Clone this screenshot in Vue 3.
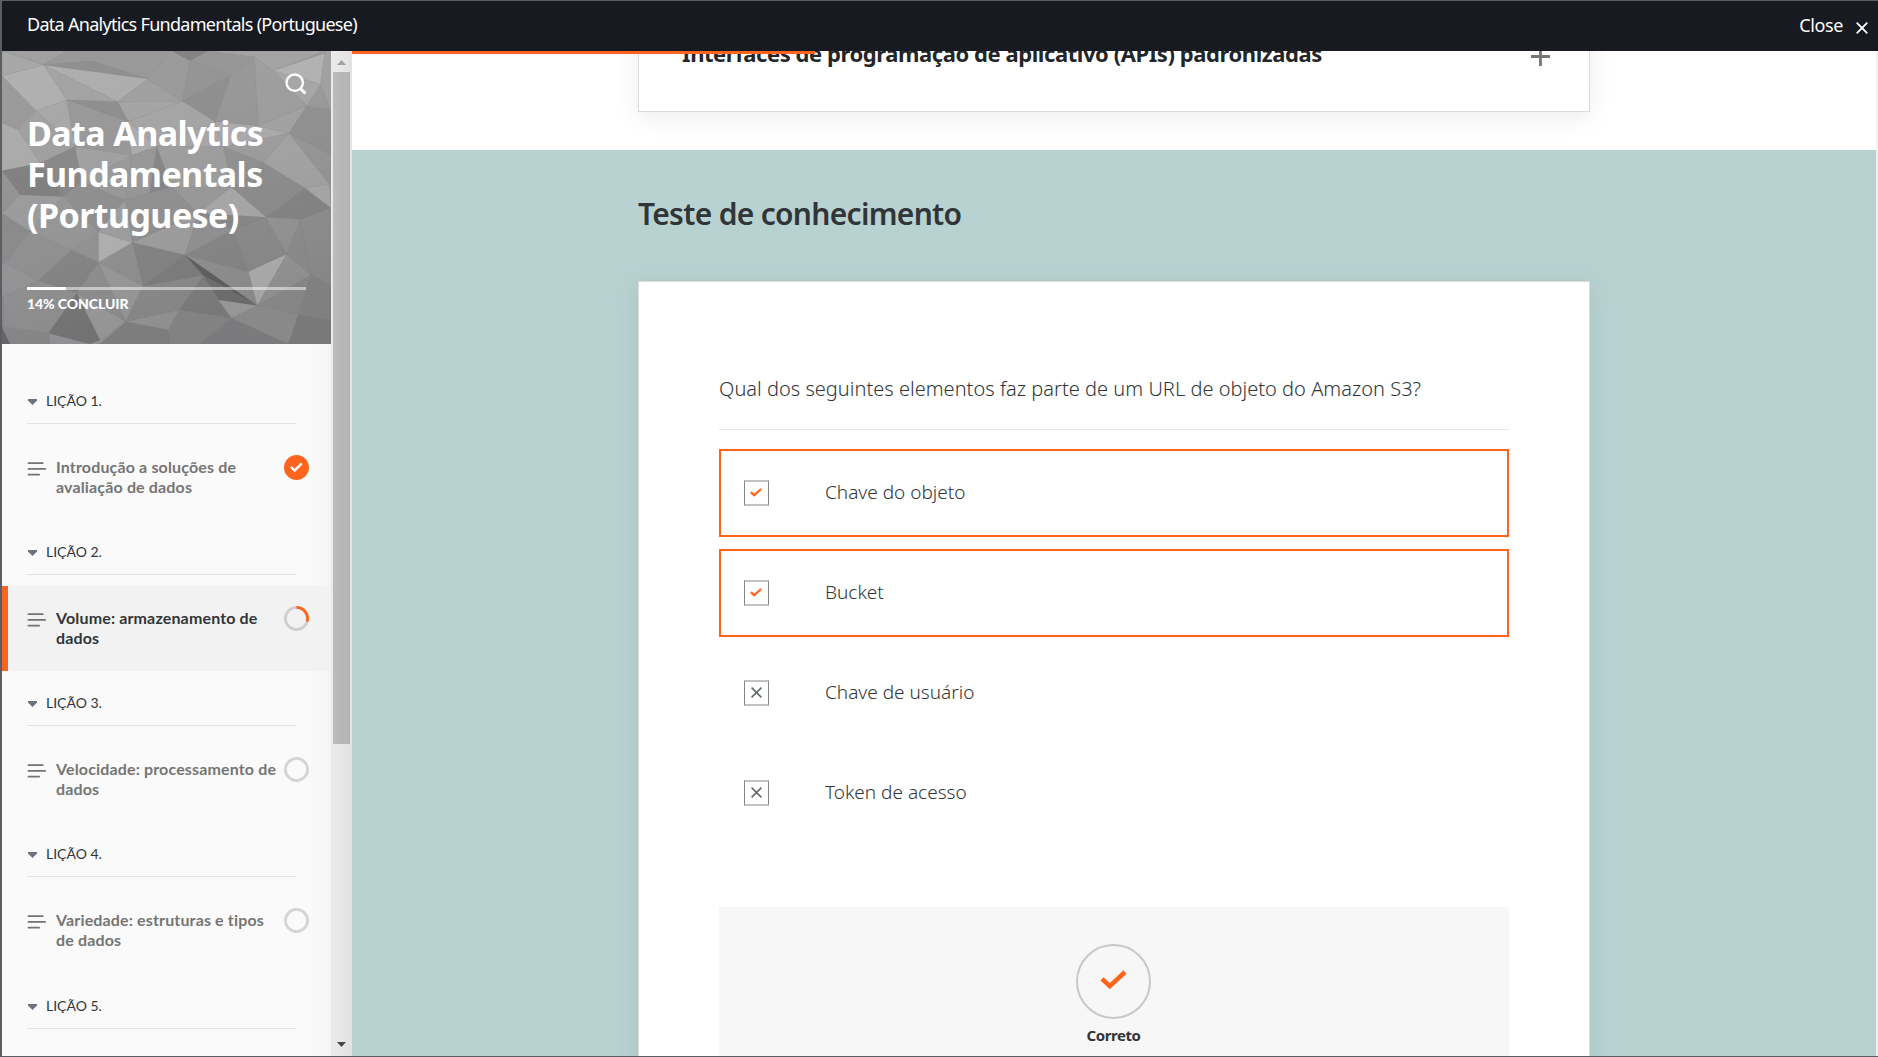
<script setup>
const lessons = [
  { id: 1, title: 'Introdução a soluções de avaliação de dados', state: 'done' },
  { id: 2, title: 'Volume: armazenamento de dados', state: 'active' },
  { id: 3, title: 'Velocidade: processamento de dados', state: 'todo' },
  { id: 4, title: 'Variedade: estruturas e tipos de dados', state: 'todo' },
  { id: 5, title: '', state: 'todo' },
]

const answers = [
  { text: 'Chave do objeto', correct: true },
  { text: 'Bucket', correct: true },
  { text: 'Chave de usuário', correct: false },
  { text: 'Token de acesso', correct: false },
]

// Faceted cover artwork: polygon points and their grey level.
const facets = [
  ['6,153 200,153 130,195', 158], ['6,153 130,195 6,228', 165], ['200,153 515,153 443,237 275,183 130,195', 150],
  ['130,195 275,183 443,237', 140], ['130,195 443,237 353,305', 172], ['130,195 353,305 200,300', 161],
  ['6,228 130,195 200,300 108,332', 174], ['6,228 108,332 55,390 6,370', 152], ['443,237 353,305 547,304', 158],
  ['353,305 547,304 385,365', 163], ['200,300 353,305 385,365', 140], ['515,153 570,182 547,304 443,237', 152],
  ['515,153 625,153 570,182', 128], ['570,182 625,153 762,170 693,225', 148], ['570,182 693,225 547,304', 146],
  ['625,153 975,153 820,212 762,170', 162], ['820,212 975,160 962,253', 177], ['975,153 993,153 993,330 962,253', 160],
  ['820,212 962,253 920,318', 166], ['762,170 820,212 920,318 775,378', 157], ['693,225 762,170 775,378 645,365', 150],
  ['547,304 693,225 645,365', 141], ['385,365 547,304 645,365 470,440', 164], ['200,300 385,365 395,466 225,440', 151],
  ['108,332 200,300 225,440', 166], ['55,390 108,332 225,440 120,490', 159], ['6,370 55,390 120,490 6,512', 170],
  ['385,365 470,440 395,466', 171], ['645,365 670,440 470,440', 167], ['645,365 775,378 867,400 670,440', 171],
  ['775,378 920,318 867,400', 162], ['920,318 993,330 993,465 867,400', 144], ['867,400 993,465 988,553', 150],
  ['867,400 988,553 915,565 790,488', 164], ['670,440 867,400 790,488', 157], ['670,440 790,488 695,562', 145],
  ['470,440 670,440 695,562 515,560', 158], ['395,466 470,440 515,560 375,600', 151], ['225,440 395,466 245,545', 160],
  ['225,440 245,545 190,590 120,490', 135], ['120,490 190,590 60,585 6,512', 126], ['6,512 60,585 6,640', 147],
  ['245,545 395,466 375,600', 153], ['245,545 375,600 295,695 190,590', 143], ['470,440 515,560 445,610', 134],
  ['515,560 695,562 595,640', 154], ['375,600 515,560 595,640 397,728', 145], ['695,562 790,488 915,565 798,652', 141],
  ['695,562 798,652 595,640', 170], ['915,565 988,553 993,625', 170], ['915,565 993,625 900,658 798,652', 133],
  ['6,640 60,585 190,590 90,695', 156], ['6,640 90,695 6,695', 138], ['190,590 295,695 215,750 90,695', 151],
  ['295,695 375,600 397,728', 160], ['295,695 397,728 295,788', 179], ['215,750 295,695 295,788', 148],
  ['397,728 595,640 555,765', 160], ['595,640 700,690 555,765', 147], ['595,640 798,652 700,690', 137],
  ['700,690 798,652 860,763 745,815', 141], ['555,765 700,690 745,815 610,827', 136], ['798,652 900,658 860,763', 150],
  ['900,658 993,625 993,855 932,825', 144], ['860,763 900,658 932,825', 143], ['6,695 90,695 15,790 6,790', 140],
  ['90,695 215,750 115,843 15,790', 146], ['6,790 15,790 115,843 10,890 6,890', 151], ['215,750 295,788 230,880 115,843', 134],
  ['295,788 397,728 430,858', 146], ['295,788 430,858 377,965', 156], ['230,880 295,788 377,965', 145],
  ['397,728 555,765 430,858', 133], ['430,858 555,765 610,827', 127], ['555,765 745,815 772,917', 146],
  ['555,765 772,917 610,827', 96], ['610,827 772,917 655,900', 113], ['745,815 860,763 772,917', 178],
  ['860,763 932,825 772,917', 152], ['430,858 610,827 538,930 377,965', 141], ['610,827 655,900 695,955 538,930', 128],
  ['655,900 772,917 695,955', 161], ['772,917 932,825 895,945', 143], ['932,825 993,855 993,960 895,945', 137],
  ['115,843 230,880 145,1000 10,980 10,890', 147], ['6,890 10,890 10,980 6,980', 141], ['230,880 377,965 300,1020', 158],
  ['230,880 300,1020 270,1032 145,1000', 120], ['6,980 30,1032 6,1032', 104], ['10,980 145,1000 150,1032 30,1032', 140],
  ['377,965 538,930 505,990', 153], ['377,965 505,990 510,1032 300,1032', 133], ['505,990 538,930 695,955 600,1032 510,1032', 139],
  ['695,955 772,917 895,945 865,1032', 147], ['695,955 865,1032 600,1032', 131], ['895,945 993,960 993,1032 865,1032', 129],
]
</script>

<template>
  <div class="window">
    <header class="topbar">
      <span class="course">Data Analytics Fundamentals (Portuguese)</span>
      <span class="close">
        Close
        <svg width="12" height="12" viewBox="0 0 12 12"><path d="M.7.7l10.6 10.6M11.3.7L.7 11.3" stroke="#fff" stroke-width="1.8" /></svg>
      </span>
    </header>

    <div class="body">
      <aside class="sidebar">
        <div class="cover">
          <svg class="art" viewBox="6 153 987 879" preserveAspectRatio="none">
            <defs>
              <linearGradient id="shade" x1="0" y1="0" x2="0.35" y2="1">
                <stop offset="0" stop-color="#fff" stop-opacity="0.03" />
                <stop offset="1" stop-color="#303038" stop-opacity="0.1" />
              </linearGradient>
            </defs>
            <rect x="6" y="153" width="987" height="879" fill="#99999b" />
            <polygon
              v-for="(f, i) in facets"
              :key="i"
              :points="f[0]"
              :fill="`rgb(${f[1]},${f[1]},${f[1] + 1})`"
              stroke="#77777a"
              stroke-opacity="0.22"
              stroke-width="1.6"
            />
            <rect x="6" y="153" width="987" height="879" fill="url(#shade)" />
          </svg>
          <svg class="search" width="22" height="22" viewBox="0 0 22 22" fill="none" stroke="#fff" stroke-width="2.4">
            <circle cx="9.7" cy="9.7" r="8.2" />
            <path d="M15.4 15.4l5 5" stroke-width="2.8" />
          </svg>
          <h1>Data Analytics Fundamentals (Portuguese)</h1>
          <div class="progress"><i></i></div>
          <p class="percent">14% CONCLUIR</p>
        </div>

        <nav class="lessons">
          <section v-for="l in lessons" :key="l.id">
            <div class="head">
              <svg width="9" height="6" viewBox="0 0 9 6"><path d="M0 0h9v1.4L4.5 6 0 1.4z" fill="#6b747c" /></svg>
              <span>LIÇÃO {{ l.id }}.</span>
            </div>
            <div v-if="l.title" class="item" :class="l.state">
              <svg class="lines" width="19" height="14" viewBox="0 0 19 14" stroke="#727277" stroke-width="1.8" stroke-linecap="round">
                <path d="M1.500 1.200h14.200M1.500 6.900h16.600M1.500 12.700h10.600" />
              </svg>
              <span class="name">{{ l.title }}</span>
              <svg class="status" width="25" height="25" viewBox="0 0 25 25" fill="none">
                <template v-if="l.state === 'done'">
                  <circle cx="12.5" cy="12.5" r="12.5" fill="#ff641e" />
                  <path d="M7.700 12.700l2.900 2.900 6.400-6.400" stroke="#fff" stroke-width="2.5" stroke-linecap="round" />
                </template>
                <template v-else>
                  <circle cx="12.5" cy="12.5" r="11.1" :stroke="l.state === 'active' ? '#cecece' : '#d4d4d4'" stroke-width="2.8" />
                  <path v-if="l.state === 'active'" d="M12.5 1.4A11.1 11.1 0 0 1 23.1 15.7" stroke="#ff641e" stroke-width="2.8" />
                </template>
              </svg>
            </div>
          </section>
        </nav>
      </aside>

      <div class="scrollbar">
        <svg width="9" height="5" viewBox="0 0 9 5"><path d="M0 5L4.500 0 9 5z" fill="#a0a0a0" /></svg>
        <div class="thumb"></div>
        <svg width="9" height="5" viewBox="0 0 9 5"><path d="M0 0h9L4.500 5z" fill="#454545" /></svg>
      </div>

      <main class="main">
        <div class="reading"></div>
        <div class="intro">
          <div class="accordion">
            <h3>Interfaces de programação de aplicativo (APIs) padronizadas</h3>
            <svg width="19" height="19" viewBox="0 0 19 19"><path d="M0 9.500h19M9.500 0v19" stroke="#757575" stroke-width="2.800" /></svg>
          </div>
        </div>

        <div class="quiz">
          <h2>Teste de conhecimento</h2>
          <div class="card">
            <p class="question">Qual dos seguintes elementos faz parte de um URL de objeto do Amazon S3?</p>
            <div class="answers">
              <div v-for="a in answers" :key="a.text" class="answer" :class="{ correct: a.correct }">
                <span class="box">
                  <svg v-if="a.correct" width="12" height="9" viewBox="0 0 12 9" fill="none"><path d="M.9 4.200l3.200 2.900L11.200 1" stroke="#ff641e" stroke-width="2.300" /></svg>
                  <svg v-else width="11" height="11" viewBox="0 0 11 11"><path d="M.6.6l9.800 9.800M10.400.6L.6 10.400" stroke="#62676b" stroke-width="1.500" /></svg>
                </span>
                <span class="label">{{ a.text }}</span>
              </div>
            </div>
            <div class="feedback">
              <div class="mark">
                <svg width="27" height="20" viewBox="0 0 27 20" fill="none"><path d="M2 8.800l7.800 7.400L25 2" stroke="#ff641e" stroke-width="4.500" /></svg>
              </div>
              <strong>Correto</strong>
            </div>
          </div>
        </div>
      </main>
    </div>
  </div>
</template>

<style>
body {
  margin: 0;
}
</style>

<style scoped>
.window {
  box-sizing: border-box;
  width: 100%;
  height: 1057px;
  display: flex;
  flex-direction: column;
  border: solid #5a5f66;
  border-width: 1px 0 1px 2px;
  overflow: hidden;
  font-family: "Noto Sans", "Open Sans", sans-serif;
  background: #fff;
}
h1,
h2,
h3,
p {
  margin: 0;
}
svg {
  display: block;
  flex: none;
}

.topbar {
  flex: none;
  height: 50px;
  box-sizing: border-box;
  padding: 0 10px 4px 25px;
  display: flex;
  align-items: center;
  justify-content: space-between;
  background: #171a21;
  color: #fff;
  font-size: 18px;
}
.course {
  letter-spacing: -0.71px;
  white-space: nowrap;
}
.close {
  display: flex;
  align-items: center;
  gap: 13px;
  letter-spacing: -0.4px;
  padding-top: 2px;
}
.close svg {
  margin-top: 6px;
}

.body {
  flex: 1;
  min-height: 0;
  display: flex;
}
.sidebar {
  flex: none;
  width: 329px;
  overflow: hidden;
  background: linear-gradient(90deg, #fafafa 305px, #f5f5f5 329px);
  font-family: Lato, sans-serif;
}
.cover {
  position: relative;
  box-sizing: border-box;
  height: 293px;
  padding: 62px 25px 0;
  color: #fff;
}
.art {
  position: absolute;
  inset: 0;
  width: 100%;
  height: 100%;
}
.search {
  position: absolute;
  top: 22px;
  right: 24px;
}
h1 {
  position: relative;
  width: 260px;
  font: 700 34px/41px "Noto Sans", sans-serif;
  letter-spacing: -0.58px;
}
.progress {
  position: relative;
  width: 279px;
  height: 3px;
  margin-top: 51px;
  background: rgba(255, 255, 255, 0.5);
}
.progress i {
  display: block;
  width: 14%;
  height: 3px;
  background: #fff;
}
.percent {
  position: relative;
  margin-top: 4px;
  font-size: 14px;
  font-weight: 900;
  line-height: 20px;
  letter-spacing: -0.08px;
}

.lessons {
  padding-top: 25px;
}
.lessons section {
  height: 151.15px;
}
.head {
  box-sizing: border-box;
  height: 55px;
  margin: 0 35px 0 25px;
  padding: 22px 0 0 1px;
  display: flex;
  align-items: flex-start;
  gap: 9px;
  border-bottom: 1px solid #e4e4e4;
  color: #313537;
  font-size: 14px;
  line-height: 20px;
}
.head svg {
  margin-top: 8px;
}
.item {
  box-sizing: border-box;
  height: 85px;
  margin-top: 11px;
  padding: 22px 22px 0 25px;
  display: flex;
  align-items: flex-start;
  color: #757575;
  font-size: 16px;
  font-weight: 700;
  line-height: 20px;
  letter-spacing: 0.15px;
}
.item.active {
  padding-left: 19px;
  border-left: 6px solid #ff641e;
  background: #f2f2f2;
  color: #313537;
}
.lines {
  margin: 5px 10px 0 0;
}
.name {
  flex: 1;
}
.status {
  margin: -2px 0 0 2px;
}

.scrollbar {
  flex: none;
  box-sizing: border-box;
  width: 21px;
  padding: 9px 0;
  display: flex;
  flex-direction: column;
  align-items: center;
  background: linear-gradient(90deg, #ebebeb, #e2e2e2);
}
.thumb {
  width: 17px;
  height: 672px;
  margin: 7px 0 auto;
  background: linear-gradient(90deg, #bcbcbc, #b3b3b3);
}

.main {
  position: relative;
  flex: 1;
  min-width: 0;
  overflow: hidden;
  border-right: 2px solid #f1f1f1;
}
.reading {
  position: absolute;
  z-index: 1;
  top: 0;
  left: 0;
  width: 463px;
  height: 3px;
  background: #ff641e;
}
.intro {
  height: 99px;
  padding: 0 286px;
}
.accordion {
  position: relative;
  top: -39px;
  box-sizing: border-box;
  height: 100px;
  padding: 25px 39px 0 43px;
  display: flex;
  justify-content: space-between;
  align-items: flex-start;
  border: 1px solid #dbdbdb;
  background: #fff;
  box-shadow: 0 5px 24px rgba(0, 0, 0, 0.08);
}
h3 {
  font-size: 22px;
  font-weight: 700;
  line-height: 30px;
  letter-spacing: -0.43px;
  color: #232628;
  white-space: nowrap;
}
.accordion svg {
  margin-top: 9px;
}

.quiz {
  position: relative;
  height: 907px;
  box-sizing: border-box;
  padding: 44px 286px 0;
  background: #b8d2d2;
}
h2 {
  font-size: 30px;
  font-weight: 600;
  line-height: 40px;
  letter-spacing: -0.7px;
  color: #313537;
}
.card {
  margin-top: 47px;
  height: 900px;
  box-sizing: border-box;
  padding: 92px 80px 0;
  border: 1px solid #dbdbdb;
  background: #fff;
  box-shadow: 0 4px 24px rgba(150, 185, 170, 0.5);
}
.question {
  padding-bottom: 25px;
  border-bottom: 1px solid #e4e4e4;
  font-size: 20px;
  font-weight: 300;
  line-height: 30px;
  letter-spacing: 0.02px;
  color: #313537;
  white-space: nowrap;
}
.answers {
  margin-top: 19px;
  display: flex;
  flex-direction: column;
  gap: 12px;
}
.answer {
  box-sizing: border-box;
  height: 88px;
  padding: 0 23px;
  display: flex;
  align-items: center;
  gap: 56px;
  border: 2px solid transparent;
}
.answer.correct {
  border-color: #ff641e;
}
.box {
  box-sizing: border-box;
  width: 25px;
  height: 26px;
  padding: 0 1px 1px 0;
  display: flex;
  align-items: center;
  justify-content: center;
  border: solid;
  border-width: 2px 1px;
  border-color: #c2c2c2 #858585;
}
.label {
  margin-top: -2px;
  font-size: 19px;
  font-weight: 300;
  color: #313537;
}
.feedback {
  margin-top: 70px;
  height: 200px;
  box-sizing: border-box;
  padding: 37px 1px 0 0;
  display: flex;
  flex-direction: column;
  align-items: center;
  background: #f7f7f7;
}
.mark {
  box-sizing: border-box;
  width: 75px;
  height: 75px;
  display: flex;
  align-items: center;
  justify-content: center;
  border: 2px solid #c8c8c8;
  border-radius: 50%;
}
.mark svg {
  margin-top: -3px;
}
strong {
  margin-top: 6px;
  font-size: 15px;
  line-height: 20px;
  letter-spacing: -0.4px;
  color: #313537;
}
</style>
